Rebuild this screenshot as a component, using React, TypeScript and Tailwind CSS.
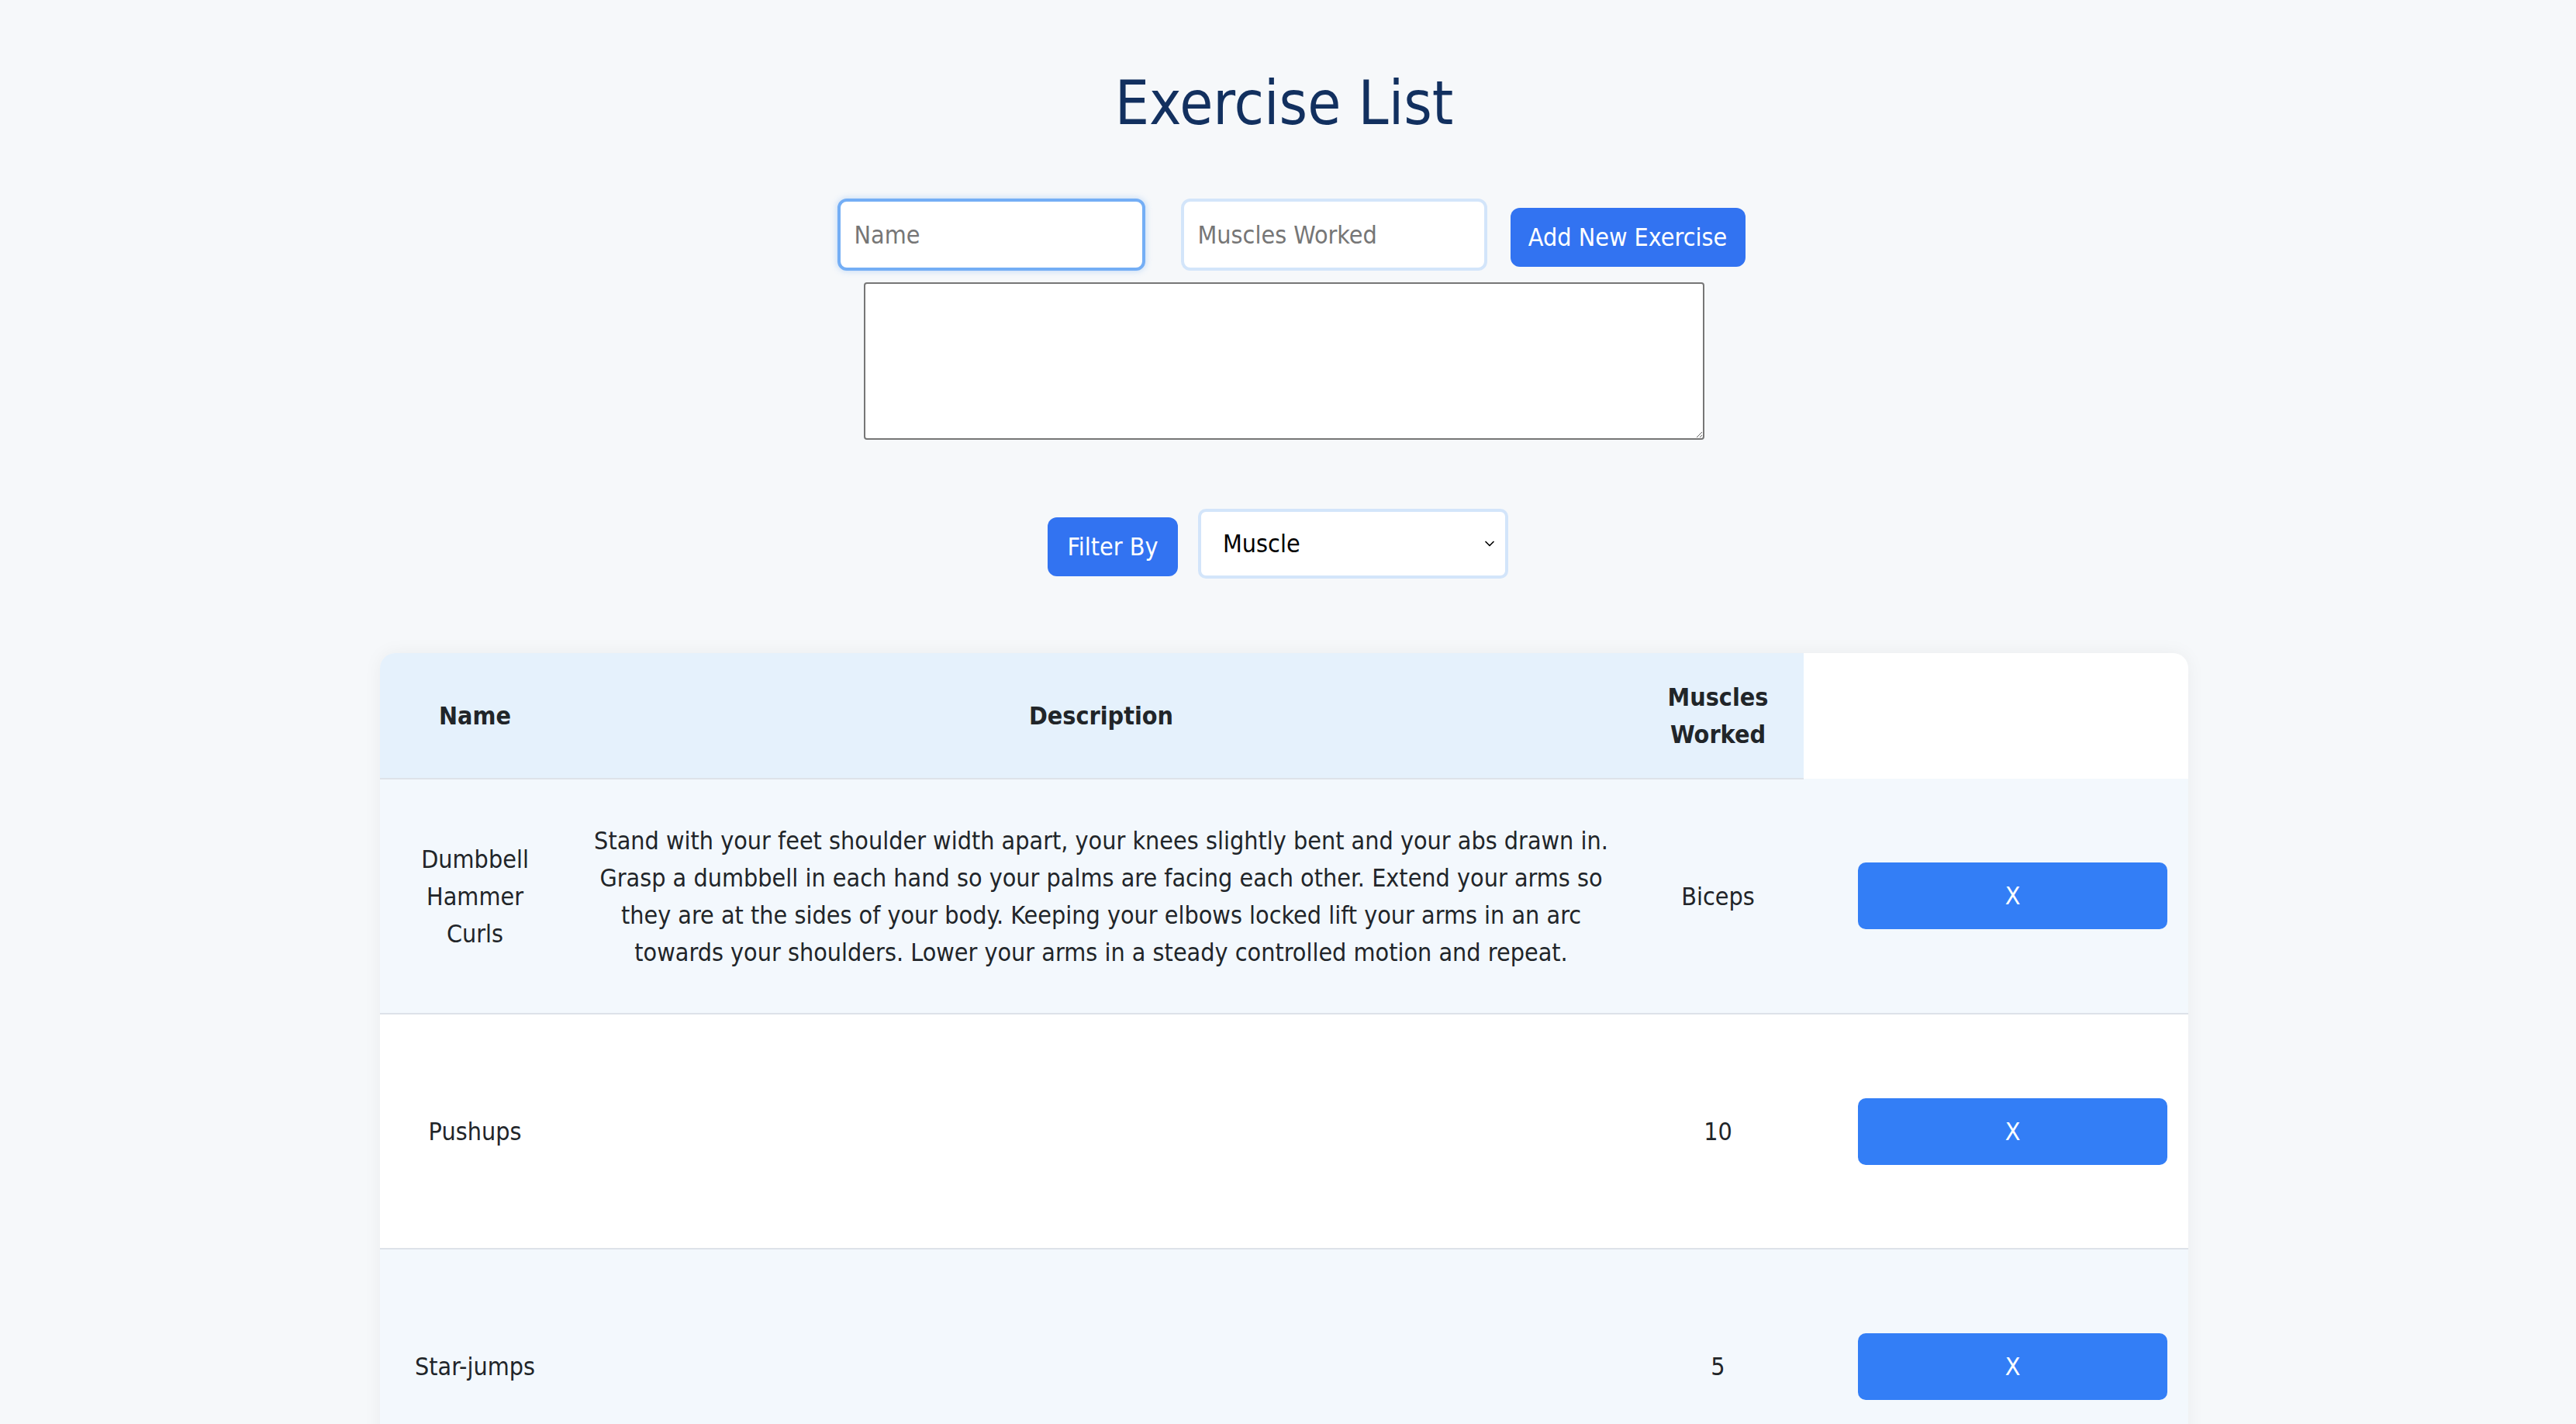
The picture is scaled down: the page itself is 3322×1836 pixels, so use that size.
import { ChevronDown } from "lucide-react";

type Exercise = {
  name: string;
  description: string[];
  muscles: string;
};

const exercises: Exercise[] = [
  {
    name: "Dumbbell Hammer Curls",
    description: [
      "Stand with your feet shoulder width apart, your knees slightly bent and your abs drawn in.",
      "Grasp a dumbbell in each hand so your palms are facing each other. Extend your arms so",
      "they are at the sides of your body. Keeping your elbows locked lift your arms in an arc",
      "towards your shoulders. Lower your arms in a steady controlled motion and repeat.",
    ],
    muscles: "Biceps",
  },
  { name: "Pushups", description: [], muscles: "10" },
  { name: "Star-jumps", description: [], muscles: "5" },
];

export default function App() {
  return (
    <div className="min-h-screen bg-[#f6f8fa] pr-[10px] pb-[40px] font-['DejaVu_Sans_Condensed','Liberation_Sans',sans-serif] text-[32px] leading-[48px] text-[#212529]">
      <div className="flex flex-col items-center">
        <h1 className="pt-[85px] text-[78px] leading-[96px] text-[#12305f]">Exercise List</h1>

        <div className="mt-[75px] ml-[18px] flex items-center">
          <input
            placeholder="Name"
            className="h-[93px] w-[397px] rounded-[12px] border-[4px] border-[#74aef5] bg-white pl-[18px] text-[32px] shadow-[0_0_8px_rgba(116,174,245,0.45)] outline-none placeholder:text-[#767676]"
          />
          <input
            placeholder="Muscles Worked"
            className="ml-[46px] h-[93px] w-[395px] rounded-[12px] border-[4px] border-[#d3e5fa] bg-white pl-[18px] text-[32px] outline-none placeholder:text-[#767676]"
          />
          <button className="mt-[7px] ml-[30px] h-[76px] w-[303px] rounded-[12px] bg-[#3273f1] text-[32px] text-white">
            Add New Exercise
          </button>
        </div>

        <textarea className="mt-[15px] h-[203px] w-[1084px] rounded-[4px] border-[2px] border-[#767676] bg-white" />

        <div className="mt-[89px] mr-[16px] flex items-center">
          <button className="mt-[8px] h-[76px] w-[168px] rounded-[12px] bg-[#3273f1] text-[32px] text-white">Filter By</button>
          <div className="relative ml-[26px]">
            <select className="h-[90px] w-[400px] appearance-none rounded-[10px] border-[4px] border-[#d3e5fa] bg-white pl-[28px] text-[32px] text-black outline-none">
              <option>Muscle</option>
            </select>
            <ChevronDown className="pointer-events-none absolute right-[14px] top-[35px] h-[20px] w-[20px] text-black" strokeWidth={2} />
          </div>
        </div>

        <div className="mt-[96px] w-[2332px] overflow-hidden rounded-t-[20px] shadow-[0_0_24px_rgba(0,0,0,0.05)]">
          <table className="w-full table-fixed border-collapse text-center">
            <colgroup>
              <col className="w-[245px]" />
              <col className="w-[1370px]" />
              <col className="w-[221px]" />
              <col className="w-[496px]" />
            </colgroup>
            <thead>
              <tr className="h-[162px]">
                <th className="border-b-[2px] border-[#dde2e9] bg-[#e5f1fc] px-[24px] font-bold">Name</th>
                <th className="border-b-[2px] border-[#dde2e9] bg-[#e5f1fc] px-[24px] font-bold">Description</th>
                <th className="border-b-[2px] border-[#dde2e9] bg-[#e5f1fc] px-[24px] font-bold">Muscles Worked</th>
                <th className="bg-white" />
              </tr>
            </thead>
            <tbody>
              {exercises.map((ex, i) => (
                <tr
                  key={ex.name}
                  className={
                    (i % 2 === 0 ? "bg-[#f3f8fd]" : "bg-white") +
                    " h-[303px] border-b-[2px] border-[#dde2e9]"
                  }
                >
                  <td className="px-[24px]">{ex.name}</td>
                  <td className="px-[20px]">
                    {ex.description.map((line) => (
                      <div key={line} className="whitespace-nowrap">
                        {line}
                      </div>
                    ))}
                  </td>
                  <td className="px-[24px]">{ex.muscles}</td>
                  <td className="pl-[70px] pr-[27px]">
                    <button className="h-[86px] w-full rounded-[10px] bg-[#337ef6] text-[32px] text-white">X</button>
                  </td>
                </tr>
              ))}
            </tbody>
          </table>
        </div>
      </div>
    </div>
  );
}
